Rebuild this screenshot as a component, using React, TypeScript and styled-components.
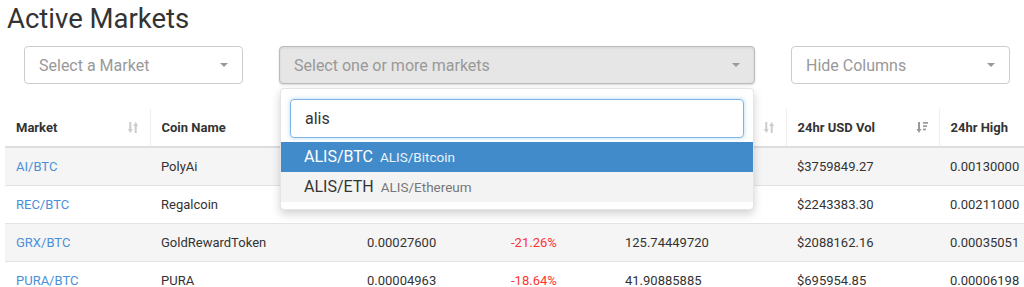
import React from 'react'
import styled, { createGlobalStyle, css } from 'styled-components'

const GlobalStyle = createGlobalStyle`
  html, body {
    margin: 0;
    padding: 0;
    background: #fff;
    overflow: hidden;
  }
  body {
    font-family: Roboto, "Liberation Sans", Arial, sans-serif;
    color: #333;
  }
`

const Page = styled.div`
  position: relative;
  width: 1024px;
  height: 287px;
  overflow: hidden;
`

const Title = styled.h1`
  margin: 0;
  padding: 4px 0 0 7px;
  height: 42px;
  box-sizing: border-box;
  font-size: 27.5px;
  font-weight: 400;
  line-height: 30px;
  color: #333;
`

const Filters = styled.div`
  display: grid;
  grid-template-columns: 219px 476px 219px;
  column-gap: 36px;
  padding: 4px 0 0 24px;
  height: 67px;
  box-sizing: border-box;
`

const SelectWrap = styled.div`
  position: relative;
`

const SelectBox = styled.div<{ open?: boolean }>`
  display: flex;
  align-items: center;
  justify-content: space-between;
  height: 38px;
  box-sizing: border-box;
  padding: 0 14px 0 14px;
  border: 1px solid #ccc;
  border-radius: 4px;
  background: #fff;
  font-size: 16px;
  color: #999;
  ${(p) =>
    p.open &&
    css`
      background: #e6e6e6;
      border-color: #bbb;
      box-shadow: inset 0 1px 3px rgba(0, 0, 0, 0.08), 0 1px 2px rgba(0, 0, 0, 0.15);
    `}
`

const Caret = styled.span`
  width: 0;
  height: 0;
  border-left: 4px solid transparent;
  border-right: 4px solid transparent;
  border-top: 4px solid #999;
`

const Dropdown = styled.div`
  position: absolute;
  top: 42px;
  left: 1px;
  right: 1px;
  z-index: 5;
  background: #fff;
  border: 1px solid #e4e4e4;
  border-radius: 4px;
  box-shadow: 0 4px 10px rgba(0, 0, 0, 0.18);
  padding: 10px 0 7px;
`

const SearchInput = styled.div`
  margin: 0 9px 4px 9px;
  height: 39px;
  box-sizing: border-box;
  border: 1px solid #7fb4e6;
  border-radius: 4px;
  box-shadow: 0 0 4px rgba(102, 175, 233, 0.5);
  display: flex;
  align-items: center;
  padding-left: 14px;
  font-size: 16px;
  color: #333;
`

const Option = styled.div<{ active?: boolean }>`
  display: flex;
  align-items: baseline;
  gap: 7px;
  height: 30px;
  line-height: 30px;
  padding-left: 23px;
  font-size: 16px;
  background: ${(p) => (p.active ? '#428bca' : '#f3f3f3')};
  color: ${(p) => (p.active ? '#fff' : '#333')};
`

const OptionSub = styled.span<{ active?: boolean }>`
  font-size: 13.5px;
  color: ${(p) => (p.active ? '#eaf2fa' : '#777')};
`

const Table = styled.table`
  margin-left: 5px;
  border-collapse: collapse;
  table-layout: fixed;
  width: 1162px;
  font-size: 13px;
`

const Th = styled.th<{ divider?: boolean }>`
  height: 37px;
  padding: 0 11px 0 11px;
  text-align: left;
  font-weight: 700;
  color: #333;
  border-bottom: 2px solid #ddd;
  border-right: ${(p) => (p.divider ? '1px solid #eee' : 'none')};
  white-space: nowrap;
`

const ThInner = styled.div`
  display: flex;
  align-items: center;
  justify-content: space-between;
`

const Tr = styled.tr<{ striped?: boolean }>`
  background: ${(p) => (p.striped ? '#f5f5f5' : '#fff')};
`

const Td = styled.td<{ tone?: 'link' | 'down' }>`
  height: 37px;
  padding: 0 11px;
  border-top: 1px solid #e3e3e3;
  white-space: nowrap;
  color: ${(p) => (p.tone === 'link' ? '#4a90d9' : p.tone === 'down' ? '#ff3333' : '#333')};
`

const SortIcon = ({ active }: { active?: boolean }) =>
  active ? (
    <svg width="12" height="13" viewBox="0 0 12 13">
      <path d="M3 1v8" stroke="#999" strokeWidth="2" />
      <path d="M0.5 8h5L3 12z" fill="#999" />
      <rect x="7" y="1" width="5" height="1.7" fill="#999" />
      <rect x="7" y="4.3" width="4" height="1.7" fill="#999" />
      <rect x="7" y="7.6" width="3" height="1.7" fill="#999" />
    </svg>
  ) : (
    <svg width="12" height="13" viewBox="0 0 12 13">
      <path d="M3.3 1v8" stroke="#ccc" strokeWidth="2" />
      <path d="M0.8 8h5L3.3 12z" fill="#ccc" />
      <path d="M8.7 4v8" stroke="#ccc" strokeWidth="2" />
      <path d="M6.2 5h5L8.7 1z" fill="#ccc" />
    </svg>
  )

const columns = [
  { label: 'Market', width: 145, sort: 'idle' },
  { label: 'Coin Name', width: 206 },
  { label: 'Last Price', width: 144, sort: 'idle' },
  { label: '24hr Change', width: 114, sort: 'idle' },
  { label: '24hr Volume', width: 172, sort: 'idle' },
  { label: '24hr USD Vol', width: 153, sort: 'desc' },
  { label: '24hr High', width: 228 },
]

// first two rows: price/change/volume are hidden behind the open dropdown
const rows = [
  ['AI/BTC', 'PolyAi', '', '', '', '$3759849.27', '0.00130000'],
  ['REC/BTC', 'Regalcoin', '', '', '', '$2243383.30', '0.00211000'],
  ['GRX/BTC', 'GoldRewardToken', '0.00027600', '-21.26%', '125.74449720', '$2088162.16', '0.00035051'],
  ['PURA/BTC', 'PURA', '0.00004963', '-18.64%', '41.90885885', '$695954.85', '0.00006198'],
]

export default function App() {
  return (
    <Page>
      <GlobalStyle />
      <Title>Active Markets</Title>
      <Filters>
        <SelectWrap>
          <SelectBox>
            Select a Market
            <Caret />
          </SelectBox>
        </SelectWrap>
        <SelectWrap>
          <SelectBox open>
            Select one or more markets
            <Caret />
          </SelectBox>
          <Dropdown>
            <SearchInput>alis</SearchInput>
            <Option active>
              ALIS/BTC <OptionSub active>ALIS/Bitcoin</OptionSub>
            </Option>
            <Option>
              ALIS/ETH <OptionSub>ALIS/Ethereum</OptionSub>
            </Option>
          </Dropdown>
        </SelectWrap>
        <SelectWrap>
          <SelectBox>
            Hide Columns
            <Caret />
          </SelectBox>
        </SelectWrap>
      </Filters>
      <Table>
        <colgroup>
          {columns.map((c) => (
            <col key={c.label} style={{ width: c.width }} />
          ))}
        </colgroup>
        <thead>
          <tr>
            {columns.map((c, i) => (
              <Th key={c.label} divider={i < columns.length - 1}>
                <ThInner>
                  {c.label}
                  {c.sort && <SortIcon active={c.sort === 'desc'} />}
                </ThInner>
              </Th>
            ))}
          </tr>
        </thead>
        <tbody>
          {rows.map((r, i) => (
            <Tr key={r[0]} striped={i % 2 === 0}>
              {r.map((v, j) => (
                <Td
                  key={j}
                  tone={j === 0 ? 'link' : j === 3 && v.startsWith('-') ? 'down' : undefined}
                >
                  {v}
                </Td>
              ))}
            </Tr>
          ))}
        </tbody>
      </Table>
    </Page>
  )
}
